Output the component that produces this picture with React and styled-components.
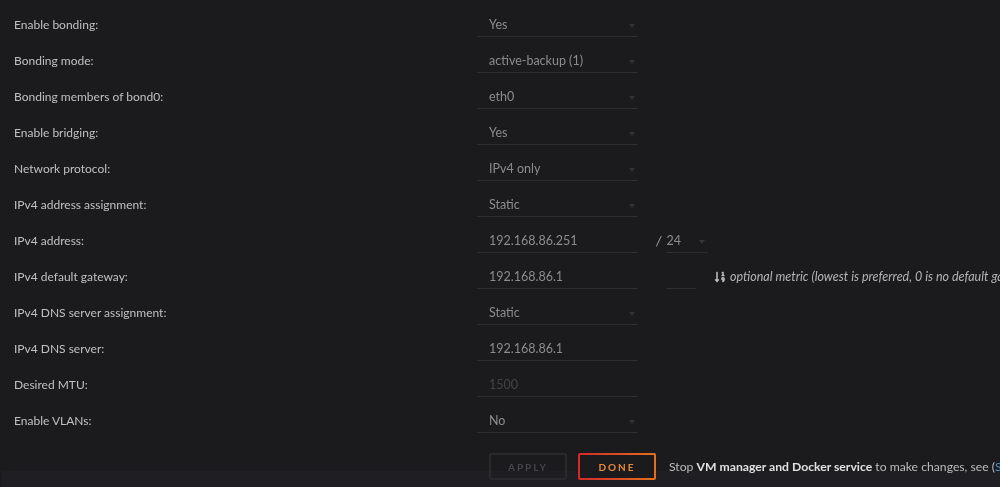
import React from "react";
import styled, { createGlobalStyle } from "styled-components";
import { FaSortNumericDown } from "react-icons/fa";

const Global = createGlobalStyle`
  html, body { margin: 0; padding: 0; background: #1b1b1e; }
  body { font-family: Lato, "Open Sans", "Liberation Sans", sans-serif; overflow: hidden; }
`;

const Page = styled.div`
  position: relative;
  z-index: 1;
  width: 1000px;
  height: 487px;
  padding-top: 19px;
  box-sizing: border-box;
  overflow: hidden;
`;

const Row = styled.div`
  display: grid;
  grid-template-columns: 477px 1fr;
  align-items: start;
  height: ${(p) => p.$h || 36}px;
`;

const Label = styled.div`
  padding-left: 14px;
  color: #c0c0c0;
  font-size: 12px;
  line-height: 12px;
  white-space: nowrap;
`;

const Value = styled.div`
  display: flex;
  align-items: flex-start;
  white-space: nowrap;
`;

const Field = styled.div`
  position: relative;
  flex-shrink: 0;
  width: ${(p) => p.$w || 161}px;
  height: 24px;
  padding-left: ${(p) => (p.$pl != null ? p.$pl : 12)}px;
  margin-left: ${(p) => p.$ml || 0}px;
  margin-top: -6px;
  box-sizing: border-box;
  border-bottom: 1px solid #2e2e30;
  color: ${(p) => (p.$dim ? "#444446" : "#8c8c8c")};
  font-size: 12.5px;
  line-height: 24px;
`;

const Caret = styled.i`
  position: absolute;
  right: 3px;
  top: 11px;
  width: 0;
  height: 0;
  border-left: 3px solid transparent;
  border-right: 3px solid transparent;
  border-top: 4px solid #343436;
`;

const Slash = styled.span`
  color: #a8a8a8;
  font-size: 13px;
  font-style: italic;
  line-height: 12px;
  margin: 0 5px 0 18px;
`;

const Metric = styled.div`
  margin-left: 18px;
  display: flex;
  align-items: center;
  gap: 4px;
  color: #b4b4b4;
  font-size: 12.5px;
  font-style: italic;
  line-height: 12px;
  svg { font-size: 12px; color: #c0c0c0; }
`;

const Buttons = styled.div`
  display: flex;
  align-items: center;
  padding-left: 12px;
  gap: 11px;
  margin-top: 2px;
  white-space: nowrap;
  overflow: hidden;
`;

const Btn = styled.button`
  flex-shrink: 0;
  box-sizing: border-box;
  width: 78px;
  height: 27px;
  background: transparent;
  font-family: inherit;
  font-size: 10px;
  font-weight: 700;
  letter-spacing: 2px;
  padding: 0;
  border-radius: 2px;
  border: 2px solid #2a2a2c;
  color: #464648;
`;

const DoneBtn = styled(Btn)`
  border: 2px solid transparent;
  background:
    linear-gradient(#1b1b1e, #1b1b1e) padding-box,
    linear-gradient(90deg, #d22a2a, #e4701f) border-box;
  color: #e88a3a;
`;

const Note = styled.span`
  margin-left: 2px;
  color: #bdbdbd;
  font-size: 12.2px;
  b { color: #e0e0e0; font-weight: 700; }
  a { color: #4a8fd0; text-decoration: none; }
`;

const Footer = styled.div`
  position: fixed;
  left: 2px;
  right: 0;
  bottom: 0;
  height: 16px;
  background: #1e1e23;
  z-index: 0;
`;

const rows = [
  ["Enable bonding:", "Yes"],
  ["Bonding mode:", "active-backup (1)"],
  ["Bonding members of bond0:", "eth0"],
  ["Enable bridging:", "Yes"],
  ["Network protocol:", "IPv4 only"],
  ["IPv4 address assignment:", "Static"],
];

const Select = ({ children, ...rest }) => (
  <Field {...rest}>
    <span>{children}</span>
    <Caret />
  </Field>
);

export default function App() {
  return (
    <>
      <Global />
      <Footer />
      <Page>
        {rows.map(([l, v]) => (
          <Row key={l}>
            <Label>{l}</Label>
            <Value><Select>{v}</Select></Value>
          </Row>
        ))}
        <Row>
          <Label>IPv4 address:</Label>
          <Value>
            <Field>192.168.86.251</Field>
            <Slash>/</Slash>
            <Select $w={42} $pl={0}>24</Select>
          </Value>
        </Row>
        <Row>
          <Label>IPv4 default gateway:</Label>
          <Value>
            <Field>192.168.86.1</Field>
            <Field $w={30} $pl={0} $ml={28} />
            <Metric>
              <FaSortNumericDown />
              <span>optional metric (lowest is preferred, 0 is no default gateway)</span>
            </Metric>
          </Value>
        </Row>
        <Row>
          <Label>IPv4 DNS server assignment:</Label>
          <Value><Select>Static</Select></Value>
        </Row>
        <Row>
          <Label>IPv4 DNS server:</Label>
          <Value><Field>192.168.86.1</Field></Value>
        </Row>
        <Row>
          <Label>Desired MTU:</Label>
          <Value><Field $dim>1500</Field></Value>
        </Row>
        <Row>
          <Label>Enable VLANs:</Label>
          <Value><Select>No</Select></Value>
        </Row>
        <Row $h={40}>
          <div />
          <Buttons>
            <Btn disabled>APPLY</Btn>
            <DoneBtn>DONE</DoneBtn>
            <Note>
              Stop <b>VM manager and Docker service</b> to make changes, see (<a href="#">Settings</a>)
            </Note>
          </Buttons>
        </Row>
      </Page>
    </>
  );
}
